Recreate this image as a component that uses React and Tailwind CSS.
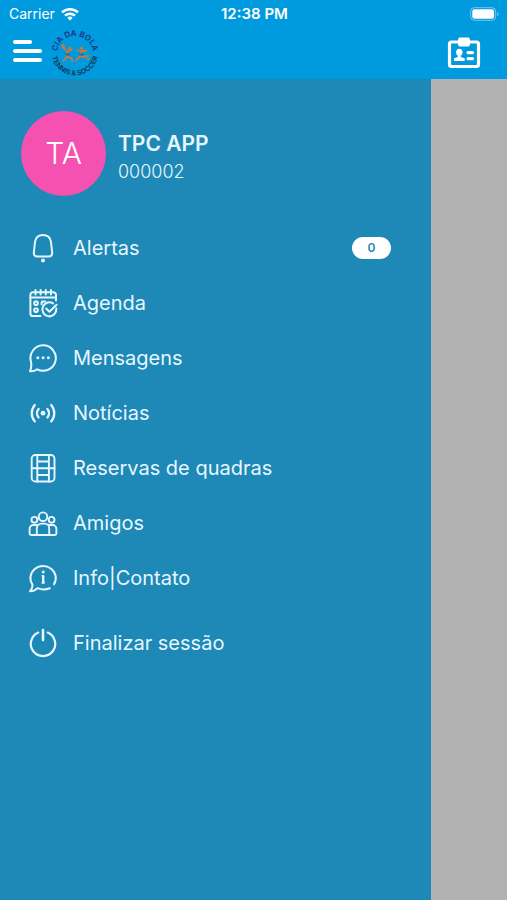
import { useState } from "react";

const iconProps = {
  viewBox: "0 0 30 30",
  className: "size-[30px] shrink-0",
  fill: "none",
  stroke: "currentColor",
  strokeWidth: 2,
  strokeLinecap: "round",
  strokeLinejoin: "round",
  "aria-hidden": true,
};

function BellIcon() {
  return (
    <svg {...iconProps}>
      <path d="M15 2c-4.600 0-7.400 3-8 7L5.900 19c-.4 3 .8 4.600 3.500 4.600h11.200c2.700 0 3.900-1.600 3.500-4.600L23 9c-.6-4-3.400-7-8-7z" />
      <circle cx="15" cy="27.400" r="2" fill="currentColor" stroke="none" />
    </svg>
  );
}

function CalendarIcon() {
  return (
    <svg {...iconProps}>
      <path d="M12.500 28H5a2.600 2.600 0 0 1-2.600-2.600V6.800A2.600 2.600 0 0 1 5 4.200h20.400A2.600 2.600 0 0 1 28 6.800v5.700" />
      <path d="M2.400 9.400H28M7.500 2v4.400M12.600 2v4.400M17.800 2v4.400M23 2v4.400" />
      <rect x="6.300" y="13.500" width="3.400" height="3.400" rx=".8" />
      <rect x="6.300" y="20.500" width="3.400" height="3.400" rx=".8" />
      <path d="M13.600 16.300v-1.600c0-.7.4-1.200 1.100-1.200h2.400" />
      <path d="M25 15.400a7 7 0 1 0 3.300 5.200" />
      <path d="M18.200 20.500l3.200 3.200 7.200-7" />
    </svg>
  );
}

function ChatIcon() {
  return (
    <svg {...iconProps}>
      <path d="M2.900 18.500A12.700 12.700 0 1 1 9.200 26.300C7 27.900 4.500 28.500 2 28.300c1.400-3.200 1.700-6.400.9-9.800z" />
      <g fill="currentColor" stroke="none">
        <circle cx="9.800" cy="14.800" r="1.500" />
        <circle cx="15.100" cy="14.800" r="1.500" />
        <circle cx="20.400" cy="14.800" r="1.500" />
      </g>
    </svg>
  );
}

function SignalIcon() {
  return (
    <svg {...iconProps} strokeWidth={2.300}>
      <path d="M6.800 7a12.500 12.500 0 0 0 0 16.400M23.200 7a12.500 12.500 0 0 1 0 16.400" />
      <path d="M10.600 11a6.500 6.500 0 0 0 0 8.400M19.400 11a6.500 6.500 0 0 1 0 8.400" />
      <circle cx="15" cy="15.200" r="2.400" fill="currentColor" stroke="none" />
    </svg>
  );
}

function CourtIcon() {
  return (
    <svg {...iconProps} strokeWidth={1.900}>
      <rect x="3.700" y="2" width="22.800" height="26.500" rx="3.600" />
      <path d="M9.300 2v26.500M20.900 2v26.500M3.700 15.300h22.800M9.300 8.500h11.600M9.300 22h11.600" />
    </svg>
  );
}

function FriendsIcon() {
  return (
    <svg {...iconProps} strokeWidth={1.900}>
      <circle cx="15" cy="8.700" r="4.300" />
      <circle cx="6.400" cy="11.800" r="2.900" />
      <circle cx="23.600" cy="11.800" r="2.900" />
      <path d="M8.800 27V20.200a4.600 4.600 0 0 1 4.600-4.600h3.200a4.600 4.600 0 0 1 4.600 4.600V27" />
      <path d="M9.300 17H5.600a4 4 0 0 0-4 4v4.200A1.800 1.800 0 0 0 3.400 27h23.200a1.800 1.800 0 0 0 1.800-1.800V21a4 4 0 0 0-4-4h-3.700" />
    </svg>
  );
}

function InfoIcon() {
  return (
    <svg {...iconProps}>
      <path d="M21.800 25.300c-4 1.500-8.500 1.500-12.300-.2C7.500 27.200 4.800 28.300 2 28.300c1.700-1.900 2.600-4.100 2.600-6.500A12.700 12 0 1 1 26 21.200" />
      <path d="M15.200 13.200v6.300" strokeWidth="2.400" />
      <path d="M14 12.800h1.200M13.900 19.800h2.600" strokeWidth="1.200" />
      <circle cx="15.200" cy="9" r="1.500" fill="currentColor" stroke="none" />
    </svg>
  );
}

function PowerIcon() {
  return (
    <svg {...iconProps} strokeWidth={2.200}>
      <path d="M10.300 4.600a12.200 12.200 0 1 0 9.400 0" />
      <path d="M15 2v10" strokeWidth="2.600" />
    </svg>
  );
}

function WifiIcon() {
  return (
    <svg viewBox="0 0 18 14" className="h-[14px] w-[18px]" fill="none" stroke="#fff" strokeWidth="2.500" aria-hidden="true">
      <path d="M1 5.400a11.500 11.500 0 0 1 16 0" />
      <path d="M4 8.700a7.200 7.200 0 0 1 10 0" />
      <path d="M9 13.600L6.300 10.900a3.900 3.900 0 0 1 5.400 0z" fill="#fff" stroke="none" />
    </svg>
  );
}

function BatteryIcon() {
  return (
    <svg viewBox="0 0 30 14" className="h-[14px] w-[30px]" aria-hidden="true">
      <rect x=".7" y=".7" width="25" height="12.600" rx="3.600" fill="none" stroke="#fff" strokeOpacity=".45" />
      <rect x="2.300" y="2.300" width="21.800" height="9.400" rx="2.200" fill="#fff" />
      <path d="M27.200 5c1.800.6 1.800 3.400 0 4z" fill="#fff" fillOpacity=".5" />
    </svg>
  );
}

function ClubLogo() {
  return (
    <svg viewBox="0 0 50 50" className="size-[50px]" role="img" aria-label="Cia da Bola Tennis & Soccer">
      <defs>
        <path id="logo-top" d="M7 25a18 18 0 0 1 36 0" />
        <path id="logo-bottom" d="M1.500 23a23.500 23.500 0 0 0 47 0" />
      </defs>
      <g fontFamily="Inter, sans-serif" fontWeight="700" textAnchor="middle">
        <text fontSize="8" fill="#1d3c8c">
          <textPath href="#logo-top" startOffset="50%">
            CIA DA BOLA
          </textPath>
        </text>
        <text fontSize="7" fill="#103f5c">
          <textPath href="#logo-bottom" startOffset="50%">
            TENNIS &amp; SOCCER
          </textPath>
        </text>
      </g>
      <g stroke="#c9783f" strokeWidth="1.800" strokeLinecap="round" fill="none">
        <path d="M17.500 23l-3.500-4M17.500 23l4.500-2.500M17 24l-.5 4-3 4M17 28l4.500 1 1 3.500" />
        <path d="M31 22.500l-4-1.500M31 22.500l5.500-1M31 23l-1.500 4.500-3.500 4M29.500 27l4 1 4.500-1" />
      </g>
      <g fill="#c9783f">
        <ellipse cx="13.300" cy="17.500" rx="1.800" ry="2.300" />
        <circle cx="19.500" cy="19.300" r="1.700" />
        <circle cx="31.500" cy="19.300" r="1.700" />
        <circle cx="38" cy="30" r="1.300" />
      </g>
      <path d="M15.500 25.500h4M29 25.500h4" stroke="#3b5680" strokeWidth="1.500" />
    </svg>
  );
}

function BadgeIcon() {
  return (
    <svg viewBox="0 0 34 32" className="h-8 w-[34px]" aria-hidden="true">
      <rect x="2.500" y="5" width="29" height="24.500" rx="2" fill="none" stroke="#fff" strokeWidth="3.200" />
      <rect x="11" y=".5" width="12" height="9" rx="2" fill="#fff" />
      <g fill="#fff">
        <ellipse cx="12.300" cy="15.300" rx="3.200" ry="3.600" />
        <path d="M10.800 17h3v3l3.900 1.300V24H7v-2.700l3.800-1.300z" />
        <rect x="19.500" y="14" width="7.500" height="3.200" rx="1.500" />
        <rect x="19.500" y="20" width="7.500" height="3.200" rx="1.500" />
      </g>
    </svg>
  );
}

const MENU = [
  { label: "Alertas", Icon: BellIcon, count: 0 },
  { label: "Agenda", Icon: CalendarIcon },
  { label: "Mensagens", Icon: ChatIcon },
  { label: "Notícias", Icon: SignalIcon },
  { label: "Reservas de quadras", Icon: CourtIcon },
  { label: "Amigos", Icon: FriendsIcon },
  { label: "Info|Contato", Icon: InfoIcon },
];

function MenuItem({ label, Icon, count }) {
  return (
    <button type="button" className="flex h-[55px] w-full items-center gap-[15px] pr-10 pl-7 text-left">
      <Icon />
      <span className="flex-1 text-xl">{label}</span>
      {count !== undefined && (
        <span className="flex h-[22px] w-[39px] items-center justify-center rounded-full bg-white text-xs font-semibold text-[#1e88b7]">
          {count}
        </span>
      )}
    </button>
  );
}

export default function App() {
  const [open, setOpen] = useState(true);

  return (
    <div className="flex min-h-screen flex-col bg-[#b2b2b2] font-['Inter',sans-serif]">
      <header className="bg-[#009ade] text-white">
        <div className="grid h-7 grid-cols-3 items-center pr-[7px] pl-[9px]">
          <div className="flex items-center gap-1.5">
            <span className="text-sm">Carrier</span>
            <WifiIcon />
          </div>
          <span className="text-center text-[15px] font-semibold">12:38 PM</span>
          <div className="flex justify-end">
            <BatteryIcon />
          </div>
        </div>
        <div className="flex h-[51px] items-center pr-[26px] pl-[13px]">
          <button
            type="button"
            aria-label="Menu"
            aria-expanded={open}
            onClick={() => setOpen(!open)}
            className="mr-2 flex flex-col gap-[5px] pb-1.5"
          >
            <span className="h-1 w-[19px] rounded-full bg-white" />
            <span className="h-1 w-[29px] rounded-full bg-white" />
            <span className="h-1 w-[29px] rounded-full bg-white" />
          </button>
          <ClubLogo />
          <button type="button" aria-label="Cartão" className="ml-auto pb-0.5">
            <BadgeIcon />
          </button>
        </div>
      </header>

      {open && (
        <aside className="w-[85%] flex-1 bg-[#1e88b7] pt-8 text-[#e6f7ff]">
          <div className="flex items-center gap-3 pl-[21px]">
            <div className="flex size-[85px] items-center justify-center rounded-full bg-[#f551b0] text-[30px] font-light text-white">
              TA
            </div>
            <div className="pt-2">
              <p className="text-[21px] leading-7 font-semibold">TPC APP</p>
              <p className="text-lg leading-7 font-light">000002</p>
            </div>
          </div>

          <nav className="mt-6">
            {MENU.map((item) => (
              <MenuItem key={item.label} {...item} />
            ))}
            <div className="mt-[10px]">
              <MenuItem label="Finalizar sessão" Icon={PowerIcon} />
            </div>
          </nav>
        </aside>
      )}
    </div>
  );
}
